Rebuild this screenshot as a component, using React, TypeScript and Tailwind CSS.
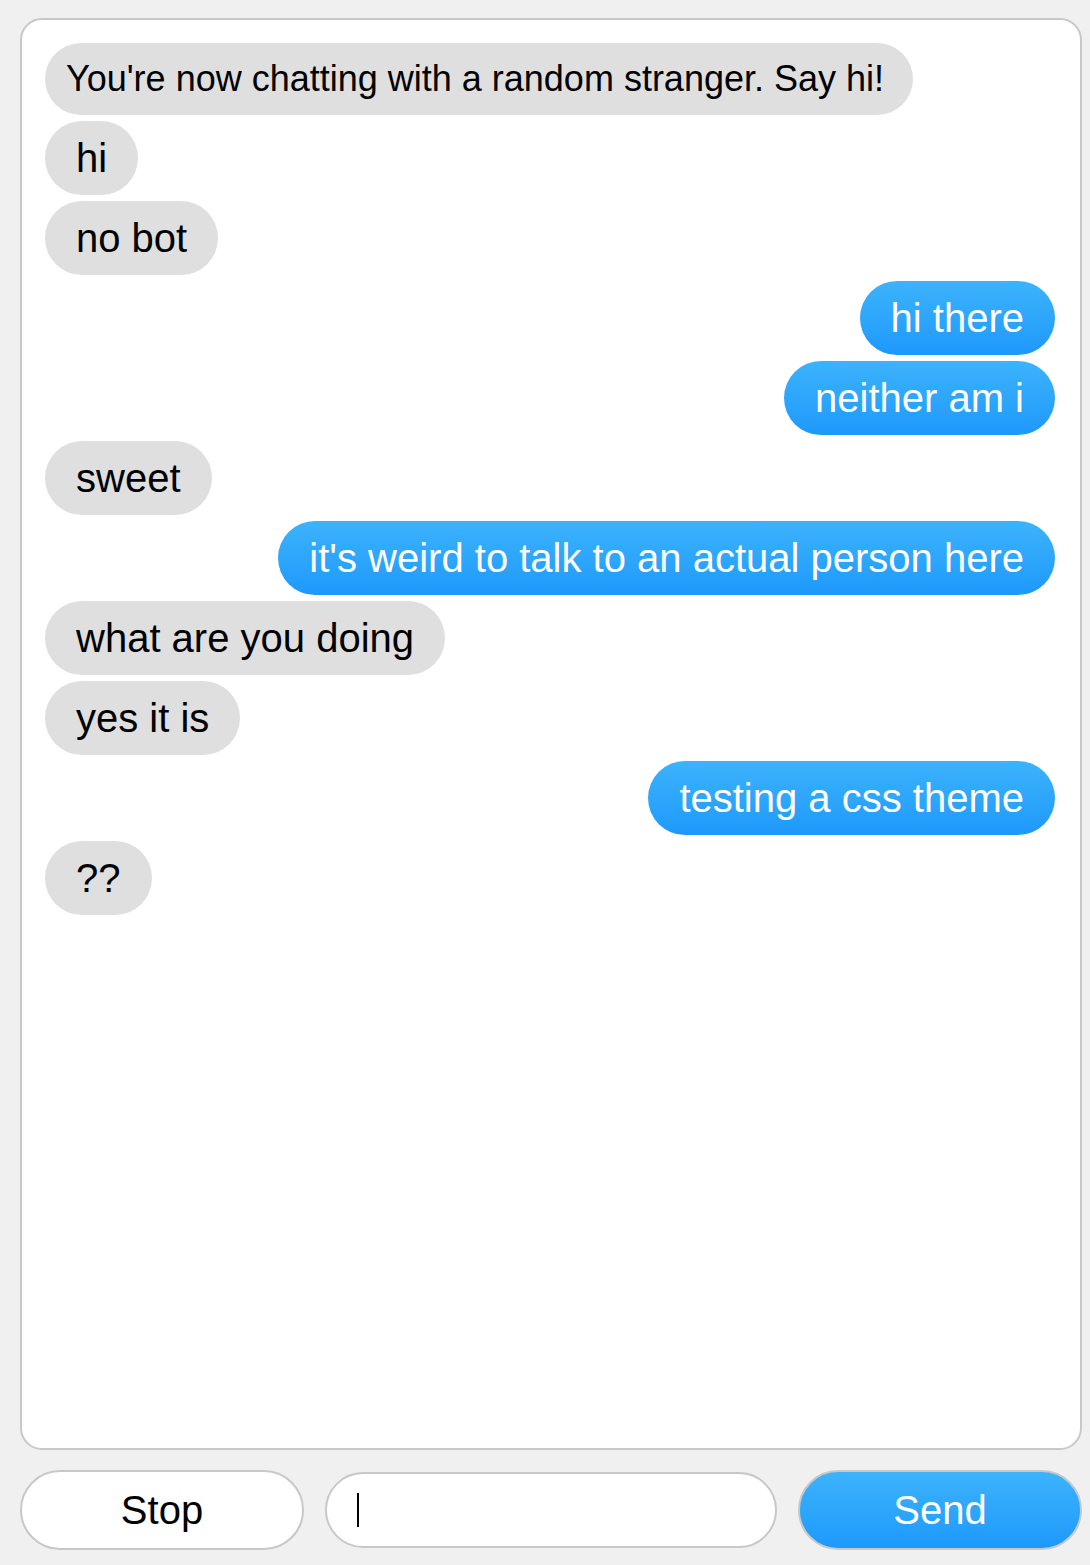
import React from "react";

interface Message {
  id: number;
  text: string;
  from: "system" | "stranger" | "me";
}

const messages: Message[] = [
  { id: 1, text: "You're now chatting with a random stranger. Say hi!", from: "system" },
  { id: 2, text: "hi", from: "stranger" },
  { id: 3, text: "no bot", from: "stranger" },
  { id: 4, text: "hi there", from: "me" },
  { id: 5, text: "neither am i", from: "me" },
  { id: 6, text: "sweet", from: "stranger" },
  { id: 7, text: "it's weird to talk to an actual person here", from: "me" },
  { id: 8, text: "what are you doing", from: "stranger" },
  { id: 9, text: "yes it is", from: "stranger" },
  { id: 10, text: "testing a css theme", from: "me" },
  { id: 11, text: "??", from: "stranger" },
];

function Bubble({ msg }: { msg: Message }) {
  if (msg.from === "system") {
    return (
      <div className="flex">
        <div className="flex h-[72px] items-center rounded-full bg-[#dfdfdf] pl-[21px] pr-[29px] text-[36px] text-black">
          {msg.text}
        </div>
      </div>
    );
  }
  if (msg.from === "me") {
    return (
      <div className="flex justify-end">
        <div className="flex h-[74px] items-center rounded-full bg-gradient-to-b from-[#3cb3fc] to-[#1d99fb] px-[31px] text-[40px] text-white">
          {msg.text}
        </div>
      </div>
    );
  }
  return (
    <div className="flex">
      <div className="flex h-[74px] items-center rounded-full bg-[#dfdfdf] px-[31px] text-[40px] text-black">
        {msg.text}
      </div>
    </div>
  );
}

export default function App() {
  return (
    <div
      className="h-[1565px] w-[1090px] bg-[#f0f0f0] pl-[20px] pr-[8px] pt-[18px]"
      style={{ fontFamily: '"Liberation Sans", Arial, sans-serif' }}
    >
      <div className="h-[1432px] rounded-[22px] border-2 border-[#c8c8c8] bg-white pl-[23px] pr-[25px] pt-[23px]">
        <div className="flex flex-col gap-[6px]">
          {messages.map((m) => (
            <Bubble key={m.id} msg={m} />
          ))}
        </div>
      </div>

      <div className="mt-[20px] flex h-[80px] items-center gap-[21px]">
        <button className="h-[80px] w-[284px] shrink-0 rounded-full border-2 border-[#c8c8c8] bg-white text-[40px] text-black">
          Stop
        </button>
        <div className="flex h-[76px] flex-1 items-center rounded-full border-2 border-[#c8c8c8] bg-white pl-[30px]">
          <div className="h-[34px] w-[2px] bg-black" />
        </div>
        <button className="h-[80px] w-[284px] shrink-0 rounded-full border-2 border-[#c8c8c8] bg-gradient-to-b from-[#3cb3fc] to-[#1d99fb] text-[40px] text-white">
          Send
        </button>
      </div>
    </div>
  );
}
